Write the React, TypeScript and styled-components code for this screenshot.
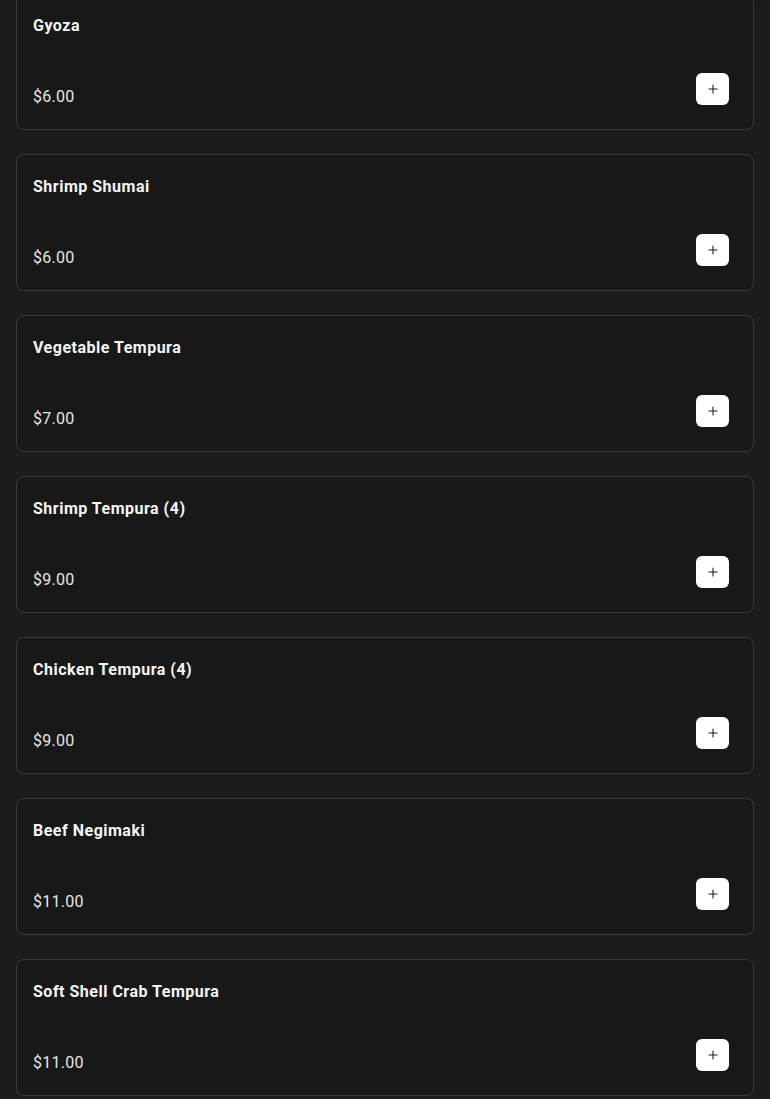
import React from 'react'
import styled, { createGlobalStyle } from 'styled-components'
import { Plus } from 'lucide-react'

const GlobalStyle = createGlobalStyle`
  html, body {
    margin: 0;
    padding: 0;
    background-color: #1c1c1c;
  }
  body {
    font-family: Roboto, "Liberation Sans", sans-serif;
    overflow: hidden;
  }
`

export const List = styled.div`
  display: flex;
  flex-direction: column;
  gap: 24px;
  padding: 0 16px;
  margin-top: -7px;
`

export const Card = styled.div`
  display: flex;
  flex-direction: column;
  justify-content: space-between;
  height: 137px;
  box-sizing: border-box;
  padding: 20px 24px 20px 16px;
  background-color: #181818;
  border: 1px solid #3a3a3a;
  border-radius: 8px;
`

export const Title = styled.h3`
  margin: 0;
  font-size: 16px;
  line-height: 24px;
  font-weight: 700;
  letter-spacing: 0.5px;
  color: #f5f5f5;
`

export const Row = styled.div`
  display: flex;
  justify-content: space-between;
  align-items: flex-end;
`

export const Price = styled.span`
  font-size: 16px;
  line-height: 24px;
  font-weight: 400;
  letter-spacing: 0.25px;
  color: #e6e6e6;
`

export const AddButton = styled.button`
  display: flex;
  align-items: center;
  justify-content: center;
  width: 33px;
  height: 32px;
  margin-bottom: 4px;
  padding: 0;
  border: none;
  border-radius: 6px;
  background-color: #ffffff;
  color: #1a1a1a;
  cursor: pointer;
`

interface Item {
  name: string,
  price: number
}

const items: Item[] = [
  { name: 'Gyoza', price: 6 },
  { name: 'Shrimp Shumai', price: 6 },
  { name: 'Vegetable Tempura', price: 7 },
  { name: 'Shrimp Tempura (4)', price: 9 },
  { name: 'Chicken Tempura (4)', price: 9 },
  { name: 'Beef Negimaki', price: 11 },
  { name: 'Soft Shell Crab Tempura', price: 11 },
]

const App = () => {
  return (
    <>
      <GlobalStyle />
      <List>
        {items.map((item) => (
          <Card key={item.name}>
            <Title>{item.name}</Title>
            <Row>
              <Price>${item.price.toFixed(2)}</Price>
              <AddButton aria-label={`Add ${item.name}`}>
                <Plus size={14} strokeWidth={1.8} />
              </AddButton>
            </Row>
          </Card>
        ))}
      </List>
    </>
  )
}

export default App
